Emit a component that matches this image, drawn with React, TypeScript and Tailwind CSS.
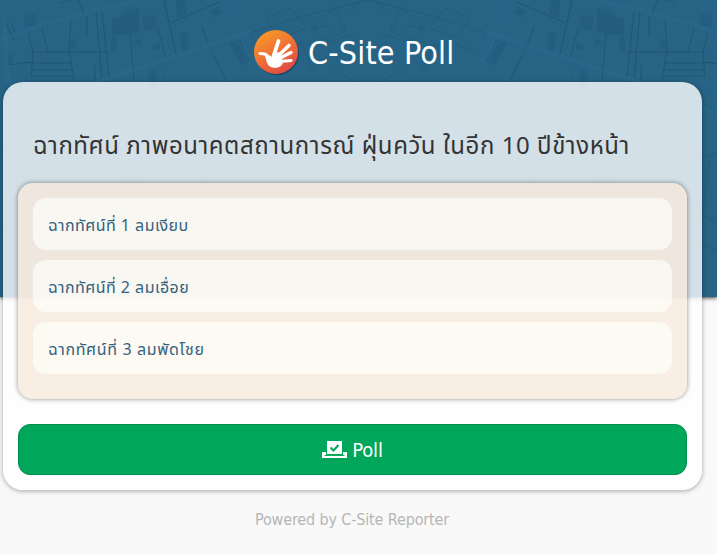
import React from 'react';

const choices = [
  { label: 'ฉากทัศน์ที่ 1 ลมเงียบ', tracking: 'tracking-[0.45px]' },
  { label: 'ฉากทัศน์ที่ 2 ลมเอื่อย', tracking: 'tracking-[0.45px]' },
  { label: 'ฉากทัศน์ที่ 3 ลมพัดโชย', tracking: 'tracking-[0.65px]' },
];

function StreetTile() {
  return (
    <g fill="none">
      <g fill="#205677" fillOpacity=".4">
        <path d="M123 12l16-4-2 25-25 3v-17l10-3zM139 8V33l-15 0V10z" />
        <path d="M24 16l11-2 1 11-11 2zM111 38l6-1v14l-6 1zM180 34l7-2 2 18-7 2zM176 0l9 0 2 14-10 3zM210 12l8-5 4 5-8 5zM7 55l6-1v9l-7 2z" />
        <path d="M70 42l5-3 2 9-6 2zM134 41l7-2v6l-7 1zM153 45l7-2v6l-7 1zM230 43l10-4 10 22-9 5zM148 72l7-3 3 18-7 3zM142 17l13-2 2 13-13 2z" />
      </g>
      <g stroke="#1b4f6f" strokeWidth="1" strokeOpacity=".65">
        <path d="M31 52H108M33 52l-2 26M31 63H72M32 70H73M33 76H72M71 21L69 50l5 31M7 65L31 62M96 12l5 55M102 12l7 65M87 16v20M95 65v16M100 63l2 15M124 33l6 1 4 46M158 28l7 28M164 0l12 54M170 23l50-21M202 27l7 19M211 50l28 57M78 0l6 14M61 3l16-5M5 21l8 18M11 22l4 11M42 28l6 23M28 33l5 19" />
      </g>
      <g stroke="#306f91" strokeOpacity=".6">
        <path d="M0 39L42 23 100 8 137 0M0 41L42 25 102 10 142 0M0 120L53 98 113 75 250 31M0 122L53 100 113 77 250 33M3 13l4 73M5 13l4 73" />
        <path d="M218 0l34 70M222 0l34 70M226 0l34 70M230 0l34 70M239 36l30 57" strokeOpacity=".5" />
      </g>
      <g stroke="#1b4f6f" strokeOpacity=".35">
        <path d="M81 83l10 36M119 80l16 43M160 68l18 52 60-17M98 89l26 85M100 96h14M102 103h14M105 110h14M108 117h14M110 124h14M0 144l26 12 40-9M26 156l8 62 74-26M70 202l22 73M190 140l28 100M128 180l40 101M0 230l60-26 110-38M0 257l130-49M265 18l26-10 15 20-26 10zM310 30l24-22 12 22-20 10M310 30l20-5M350 12l10-12M313 25l12 18 32-10M284 52l18-8 14 34M355 82l-20-12-18 14M250 33l50-16 68-17M262 52l28-12" />
      </g>
    </g>
  );
}

function MapBackdrop() {
  return (
    <svg className="block h-full w-full" viewBox="0 0 717 297" preserveAspectRatio="none" aria-hidden="true">
      <defs>
        <g id="streets"><StreetTile /></g>
        <clipPath id="half"><path d="M0 0H368V297H0z" /></clipPath>
      </defs>
      <rect width="717" height="297" fill="#266385" />
      <g clipPath="url(#half)"><use href="#streets" /></g>
      <g transform="translate(736 0) scale(-1 1)"><g clipPath="url(#half)"><use href="#streets" /></g></g>
    </svg>
  );
}

function HandLogo() {
  return (
    <svg className="h-[48px] w-[48px] shrink-0" viewBox="0 0 48 48" aria-hidden="true">
      <defs>
        <linearGradient id="sunset" x1=".2" y1="0" x2=".8" y2="1">
          <stop offset="0" stopColor="#f99b25" />
          <stop offset=".55" stopColor="#ed6c38" />
          <stop offset="1" stopColor="#db4546" />
        </linearGradient>
      </defs>
      <circle cx="25" cy="25.2" r="22" fill="#17405d" fillOpacity=".8" />
      <circle cx="24" cy="24" r="22" fill="url(#sunset)" />
      <g fill="none" stroke="white" strokeLinecap="round" strokeLinejoin="round">
        <path d="M21.500 28L26.500 13" strokeWidth="3.800" />
        <path d="M26 28L37 17.500" strokeWidth="3.600" />
        <path d="M28 30L39 24.500" strokeWidth="3.500" />
        <path d="M28 33.500L39 32.500" strokeWidth="3.200" />
        <path d="M8 25.500l5 .5 6 5" strokeWidth="3" />
        <path d="M13 26l7 4 3.500-6 3 1.500 3 5.500.5 4.500c-2 4-9 5-13 1.500-2-2-2-7-4-11z" fill="white" strokeWidth="1.500" />
      </g>
    </svg>
  );
}

function BallotIcon() {
  return (
    <svg className="h-[20px] w-[25px]" viewBox="0 0 25 20" aria-hidden="true">
      <path d="M5 1h15v13H5z" fill="white" />
      <path d="M0 12h4v3h17v-3h4v6H0z" fill="white" />
      <path d="M2.500 15.500h20" stroke="#08ad60" />
      <path d="M8.500 7.500l3 3 5-5.500" fill="none" stroke="#00a65a" strokeWidth="2" />
    </svg>
  );
}

export default function App() {
  return (
    <main className="relative isolate h-[554px] w-[717px] overflow-hidden bg-[#f9f9f9] font-['Noto_Sans','Noto_Sans_Thai',sans-serif]">
      <div className="absolute inset-x-0 top-0 -z-10 h-[297px] shadow-[0_1px_4px_rgba(0,0,0,0.75)]">
        <MapBackdrop />
      </div>
      <header className="flex h-[82px] items-start justify-center gap-2 pt-7 pr-[10px]">
        <HandLogo />
        <h1 className="w-[147px] font-['DejaVu_Sans_Condensed','DejaVu_Sans',sans-serif] text-[32px] leading-[50px] font-normal tracking-[0.15px] whitespace-nowrap text-white [font-stretch:condensed]">C-Site Poll</h1>
      </header>
      <section className="ml-[3px] h-[408px] w-[699px] rounded-[20px] bg-white/80 px-[15px] pt-[101px] shadow-[0_1px_5px_rgba(0,0,0,0.35)]">
        <h2 className="-mt-[61px] mb-[17px] h-[44px] pl-[15px] text-[24px] leading-[46px] tracking-[0.57px] whitespace-nowrap text-[#333]">
          ฉากทัศน์ ภาพอนาคตสถานการณ์ ฝุ่นควัน ในอีก 10 ปีข้างหน้า
        </h2>
        <div className="flex h-[216px] flex-col gap-[10px] rounded-[15px] bg-[#f7e9db]/76 px-[15px] pt-[15px] shadow-[0_0_5px_rgba(0,0,0,0.45)]">
          {choices.map((choice) => (
            <button key={choice.label} className={`h-[52px] w-full rounded-[13px] bg-[#fffffb]/65 px-[15px] pt-[2px] text-left text-[16px] leading-[50px] text-[#33617f] ${choice.tracking}`}>
              {choice.label}
            </button>
          ))}
        </div>
        <button className="mt-[25px] flex h-[51px] w-full items-center justify-center gap-[5px] rounded-[12px] border border-[#008d4c] bg-[#00a65a] text-[20px] text-white">
          <BallotIcon />
          <span className="font-['DejaVu_Sans_Condensed','DejaVu_Sans',sans-serif] text-[20px] tracking-[-0.15px] [font-stretch:condensed]">Poll</span>
        </button>
      </section>
      <footer className="pt-[18px] pr-[13px] text-center font-['DejaVu_Sans_Condensed','DejaVu_Sans',sans-serif] text-[16px] leading-6 tracking-[-0.14px] text-[#b6b6b6] [font-stretch:condensed]">Powered by C-Site Reporter</footer>
    </main>
  );
}
